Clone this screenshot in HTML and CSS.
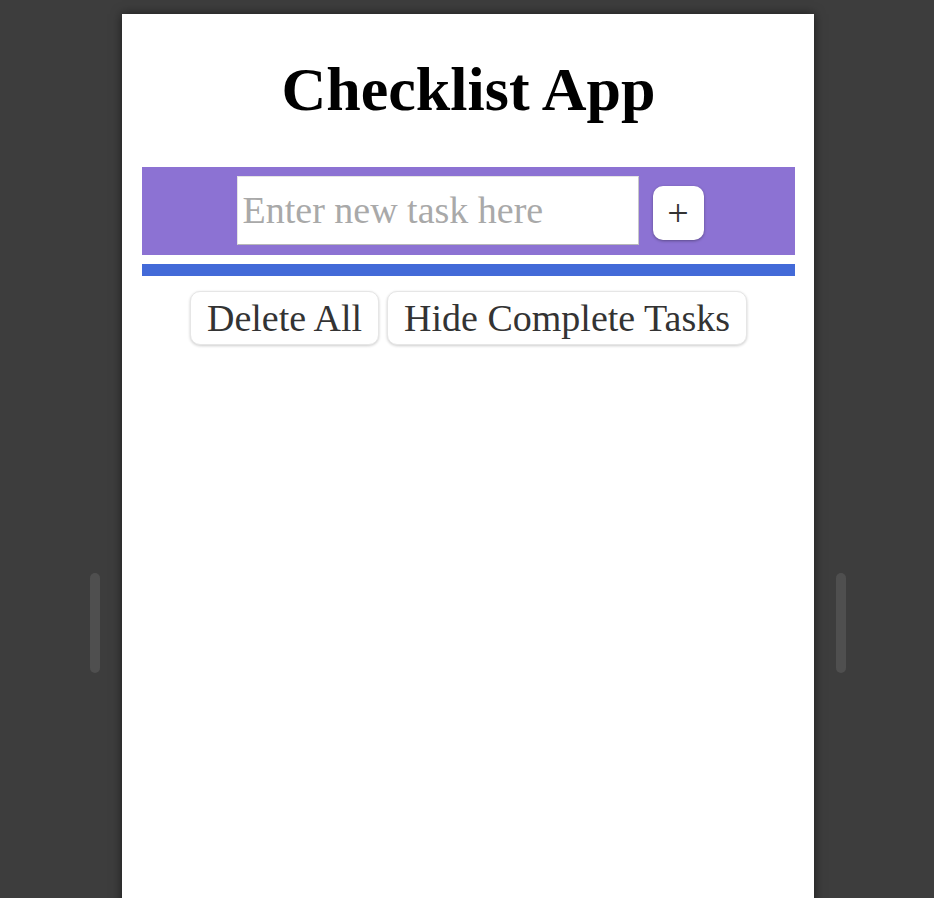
FILE: index.html
```html
<!DOCTYPE html>
<html lang="en">
<head>
<meta charset="utf-8">
<title>Checklist App</title>
<link rel="stylesheet" href="styles.css">
</head>
<body>
<div class="stage">
  <div class="handle"></div>
  <main class="panel">
    <h1 class="title">Checklist App</h1>
    <form class="add-bar" onsubmit="return false">
      <input class="task-input" type="text" placeholder="Enter new task here">
      <button class="add-btn" type="button">+</button>
    </form>
    <div class="divider"></div>
    <div class="actions">
      <button class="action-btn" type="button">Delete All</button>
      <button class="action-btn" type="button">Hide Complete Tasks</button>
    </div>
  </main>
  <div class="handle"></div>
</div>
</body>
</html>
```

FILE: styles.css
```css
html, body {
  margin: 0;
  padding: 0;
  height: 100%;
  overflow: hidden;
  background: #3d3d3d;
}
.stage {
  display: flex;
  justify-content: center;
  align-items: flex-start;
  gap: 22px;
  height: 100%;
  padding-left: 2px;
  box-sizing: border-box;
}
.handle {
  width: 10px;
  height: 100px;
  margin-top: 573px;
  border-radius: 5px;
  background: #4f4f4f;
}
.panel {
  width: 692px;
  margin-top: 14px;
  min-height: 900px;
  background: #fff;
  box-sizing: border-box;
  padding: 0 19px 0 20px;
  box-shadow: 0 0 10px rgba(0, 0, 0, 0.55);
  font-family: "Liberation Serif", "Times New Roman", serif;
}
.title {
  margin: 0;
  padding: 41px 0 44px;
  font-size: 62px;
  line-height: 68px;
  font-weight: bold;
  text-align: center;
  color: #000;
}
.add-bar {
  margin: 0;
  height: 88px;
  display: flex;
  justify-content: center;
  align-items: center;
  gap: 14px;
  padding-left: 3px;
  background: #8c72d3;
}
.task-input {
  width: 402px;
  height: 69px;
  box-sizing: border-box;
  margin: 0 0 2px;
  padding: 0 5px;
  border: 1px solid #e4e4e4;
  border-right-color: #c8c8c8;
  border-bottom-color: #b8b8b8;
  background: #fff;
  font-family: inherit;
  font-size: 38px;
  color: #333;
  outline: none;
}
.task-input::placeholder {
  color: #a9a9a9;
}
.add-btn {
  width: 51px;
  height: 54px;
  margin-top: 4px;
  padding: 0;
  border: none;
  border-radius: 10px;
  background: #fff;
  box-shadow: 0 1px 3px rgba(0, 0, 0, 0.35);
  font-family: inherit;
  font-size: 38px;
  line-height: 1;
  color: #333;
}
.divider {
  margin-top: 9px;
  height: 12px;
  background: #436ad8;
}
.actions {
  display: flex;
  justify-content: center;
  gap: 8px;
  margin-top: 15px;
}
.action-btn {
  height: 54px;
  padding: 0 16px;
  border: 1px solid #e6e6e6;
  border-radius: 10px;
  background: #fff;
  box-shadow: 0 1px 3px rgba(0, 0, 0, 0.2);
  font-family: inherit;
  font-size: 38px;
  color: #333;
}
```
